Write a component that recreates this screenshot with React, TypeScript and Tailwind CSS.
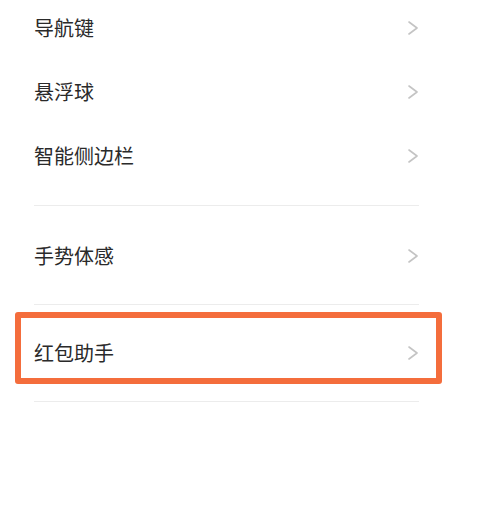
import { ReactNode } from "react";

function Chevron() {
  return (
    <svg width="12" height="14" viewBox="0 0 12 14" fill="none" className="shrink-0">
      <path d="M2 1 L10 7 L2 13" stroke="#c4c4c4" strokeWidth="1.6" strokeLinecap="round" strokeLinejoin="round" />
    </svg>
  );
}

function Row({ children }: { children: ReactNode }) {
  return (
    <div className="flex h-16 items-center justify-between">
      <span className="text-[20px] leading-none text-[#2a2a2a]">{children}</span>
      <Chevron />
    </div>
  );
}

export default function App() {
  return (
    <div
      className="relative h-[515px] w-[503px] overflow-hidden bg-white"
      style={{ fontFamily: '"Noto Sans CJK SC", "Noto Sans", sans-serif' }}
    >
      <div className="-mt-1 ml-[34px] w-[385px]">
        {/* first group */}
        <div className="border-b border-[#ececec] pb-[17px]">
          <Row>导航键</Row>
          <Row>悬浮球</Row>
          <Row>智能侧边栏</Row>
        </div>

        <div className="border-b border-[#ececec] pt-[18px] pb-4">
          <Row>手势体感</Row>
        </div>

        <div className="border-b border-[#ececec] pt-4 pb-4">
          <Row>红包助手</Row>
        </div>
      </div>

      {/* highlight box */}
      <div className="absolute left-[15px] top-[312px] h-[72px] w-[427px] rounded-[3px] border-[6px] border-[#f46d3c]" />
    </div>
  );
}
